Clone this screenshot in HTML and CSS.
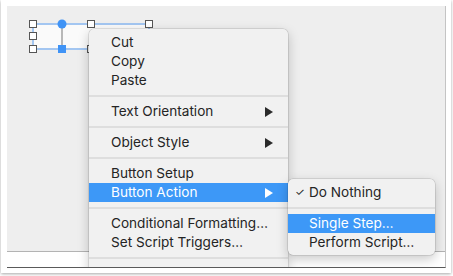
FILE: index.html
```html
<!DOCTYPE html>
<html lang="en">
<head>
    <meta charset="UTF-8">
    <title>Button Action - Context Menu</title>
    <link rel="stylesheet" href="styles.css">
</head>
<body>
    <div class="frame">
        <div class="shot">
            <div class="canvas">
                <svg class="selection" width="130" height="40" viewBox="0 0 130 40">
                    <rect x="7" y="6" width="116" height="25" fill="#fafafa" stroke="#a3c6f1" stroke-width="2"/>
                    <line x1="36" y1="6" x2="36" y2="31" stroke="#b8b8b8" stroke-width="2"/>
                    <rect x="3.5" y="2.5" width="7" height="7" fill="#fff" stroke="#555"/>
                    <rect x="61.5" y="2.5" width="7" height="7" fill="#fff" stroke="#555"/>
                    <rect x="119.5" y="2.5" width="7" height="7" fill="#fff" stroke="#555"/>
                    <rect x="3.5" y="14.5" width="7" height="7" fill="#fff" stroke="#555"/>
                    <rect x="3.5" y="27.5" width="7" height="7" fill="#fff" stroke="#555"/>
                    <rect x="61.5" y="27.5" width="7" height="7" fill="#fff" stroke="#555"/>
                    <circle cx="36" cy="6" r="4.5" fill="#3f93f6"/>
                    <rect x="32" y="27" width="8" height="8" fill="#3f93f6"/>
                </svg>
            </div>
            <div class="status-bar"></div>

            <div class="menu main-menu">
                <div class="item">Cut</div>
                <div class="item">Copy</div>
                <div class="item">Paste</div>
                <div class="sep"></div>
                <div class="item has-sub">Text Orientation</div>
                <div class="sep"></div>
                <div class="item has-sub">Object Style</div>
                <div class="sep"></div>
                <div class="item">Button Setup</div>
                <div class="item has-sub active">Button Action</div>
                <div class="sep"></div>
                <div class="item">Conditional Formatting…</div>
                <div class="item">Set Script Triggers…</div>
                <div class="sep"></div>
                <div class="item">Fill Style</div>
            </div>

            <div class="menu sub-menu">
                <div class="item checked">Do Nothing</div>
                <div class="sep"></div>
                <div class="item active">Single Step…</div>
                <div class="item">Perform Script…</div>
            </div>
        </div>
    </div>
</body>
</html>
```

FILE: styles.css
```css
* {
    margin: 0;
    padding: 0;
    box-sizing: border-box;
}

body {
    font-family: Inter, "Liberation Sans", Arial, sans-serif;
    background: #ffffff;
    width: 453px;
    height: 276px;
    overflow: hidden;
}

.frame {
    margin-left: 1px;
    width: 450px;
    height: 273px;
    padding: 6px 4px 0 6px;
    background: #ffffff;
    box-shadow: 0 1px 3px rgba(0, 0, 0, 0.35);
}

.shot {
    position: relative;
    width: 439px;
    height: 262px;
    display: flex;
    flex-direction: column;
    border-right: 1px solid #c4c4c4;
    border-bottom: 1px solid #5a5a5a;
    overflow: hidden;
}

.canvas {
    position: relative;
    height: 246px;
    background: #eeeeee;
    border-bottom: 1px solid #b3b3b3;
}

.selection {
    position: absolute;
    left: 19px;
    top: 12px;
}

.status-bar {
    flex: 1;
    background: #ffffff;
}

.menu {
    position: absolute;
    background: #f1f1f1;
    border-radius: 5px;
    box-shadow: 0 0 0 0.5px rgba(0, 0, 0, 0.18), 0 4px 12px rgba(0, 0, 0, 0.22);
    font-size: 13.6px;
    color: #242424;
}

.main-menu {
    left: 82px;
    top: 23px;
    width: 199px;
    padding-top: 4px;
}

.sub-menu {
    left: 281px;
    top: 173px;
    width: 147px;
    padding: 4px 0 3px;
}

.item {
    position: relative;
    height: 19px;
    line-height: 19px;
    padding-left: 22px;
    white-space: nowrap;
}

.sub-menu .item {
    padding-left: 21px;
}

.item.active {
    background: #3d98f7;
    color: #ffffff;
}

.has-sub::after {
    content: "";
    position: absolute;
    right: 15px;
    top: 5px;
    border-left: 8px solid #2a2a2a;
    border-top: 5px solid transparent;
    border-bottom: 5px solid transparent;
}

.has-sub.active::after {
    border-left-color: #ffffff;
}

.checked::before {
    content: "\2713";
    position: absolute;
    left: 7px;
    font-size: 11px;
}

.sep {
    height: 12px;
    display: flex;
    align-items: center;
}

.sep::after {
    content: "";
    flex: 1;
    height: 2px;
    background: #dedede;
}
```
